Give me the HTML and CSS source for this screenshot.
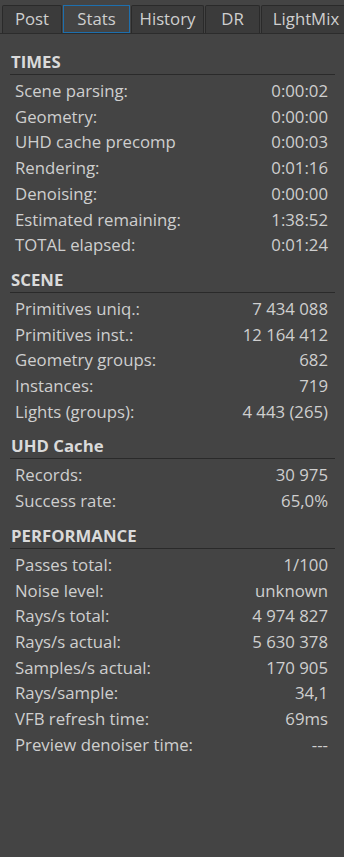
FILE: index.html
```html
<!DOCTYPE html>
<html lang="en">
<head>
    <meta charset="UTF-8">
    <meta name="viewport" content="width=device-width, initial-scale=1.0">
    <title>Render stats</title>
    <link rel="stylesheet" href="styles.css">
</head>
<body>
    <div class="tabs">
        <div class="tab">Post</div>
        <div class="tab active">Stats</div>
        <div class="tab">History</div>
        <div class="tab">DR</div>
        <div class="tab">LightMix</div>
    </div>
    <div class="panel">
        <section class="group">
            <h2>TIMES</h2>
            <ul>
                <li><span>Scene parsing:</span><span>0:00:02</span></li>
                <li><span>Geometry:</span><span>0:00:00</span></li>
                <li><span>UHD cache precomp</span><span>0:00:03</span></li>
                <li><span>Rendering:</span><span>0:01:16</span></li>
                <li><span>Denoising:</span><span>0:00:00</span></li>
                <li><span>Estimated remaining:</span><span>1:38:52</span></li>
                <li><span>TOTAL elapsed:</span><span>0:01:24</span></li>
            </ul>
        </section>
        <section class="group">
            <h2>SCENE</h2>
            <ul>
                <li><span>Primitives uniq.:</span><span>7 434 088</span></li>
                <li><span>Primitives inst.:</span><span>12 164 412</span></li>
                <li><span>Geometry groups:</span><span>682</span></li>
                <li><span>Instances:</span><span>719</span></li>
                <li><span>Lights (groups):</span><span>4 443 (265)</span></li>
            </ul>
        </section>
        <section class="group">
            <h2>UHD Cache</h2>
            <ul>
                <li><span>Records:</span><span>30 975</span></li>
                <li><span>Success rate:</span><span>65,0%</span></li>
            </ul>
        </section>
        <section class="group">
            <h2>PERFORMANCE</h2>
            <ul>
                <li><span>Passes total:</span><span>1/100</span></li>
                <li><span>Noise level:</span><span>unknown</span></li>
                <li><span>Rays/s total:</span><span>4 974 827</span></li>
                <li><span>Rays/s actual:</span><span>5 630 378</span></li>
                <li><span>Samples/s actual:</span><span>170 905</span></li>
                <li><span>Rays/sample:</span><span>34,1</span></li>
                <li><span>VFB refresh time:</span><span>69ms</span></li>
                <li><span>Preview denoiser time:</span><span>---</span></li>
            </ul>
        </section>
    </div>
</body>
</html>
```
FILE: styles.css
```css
* {
    box-sizing: border-box;
    margin: 0;
    padding: 0;
}
html, body {
    height: 100%;
}
body {
    background-color: #444444;
    color: #cfcfcf;
    font-family: "Open Sans", "Noto Sans", sans-serif;
    font-size: 16.75px;
    overflow: hidden;
}
.tabs {
    border-bottom: 1px solid #2c2c2c;
    display: flex;
    gap: 1px;
    height: 34px;
    padding: 5px 0 0 2px;
    white-space: nowrap;
}
.tab {
    background-color: #3b3b3b;
    border: 1px solid #2a2a2a;
    border-bottom: none;
    border-radius: 2px 2px 0 0;
    flex: none;
    height: 28px;
    line-height: 26px;
    text-align: center;
}
.tab:nth-child(1) { width: 60px; }
.tab:nth-child(2) { width: 67px; }
.tab:nth-child(3) { width: 73px; }
.tab:nth-child(4) { width: 55px; }
.tab:nth-child(5) { width: 90px; }
.tab.active {
    background-color: #444444;
    border: 1px solid #1d6fae;
    border-radius: 0;
}
.panel {
    padding: 6px 9px 0 10px;
}
h2 {
    border-bottom: 1px solid #2a2a2a;
    color: #dadada;
    font-size: 16.75px;
    font-weight: bold;
    line-height: 24px;
    padding: 10px 0 0 1px;
}
ul {
    list-style-type: none;
    padding: 3px 7px 0 5px;
}
li {
    display: flex;
    justify-content: space-between;
    line-height: 25.7px;
}
```
